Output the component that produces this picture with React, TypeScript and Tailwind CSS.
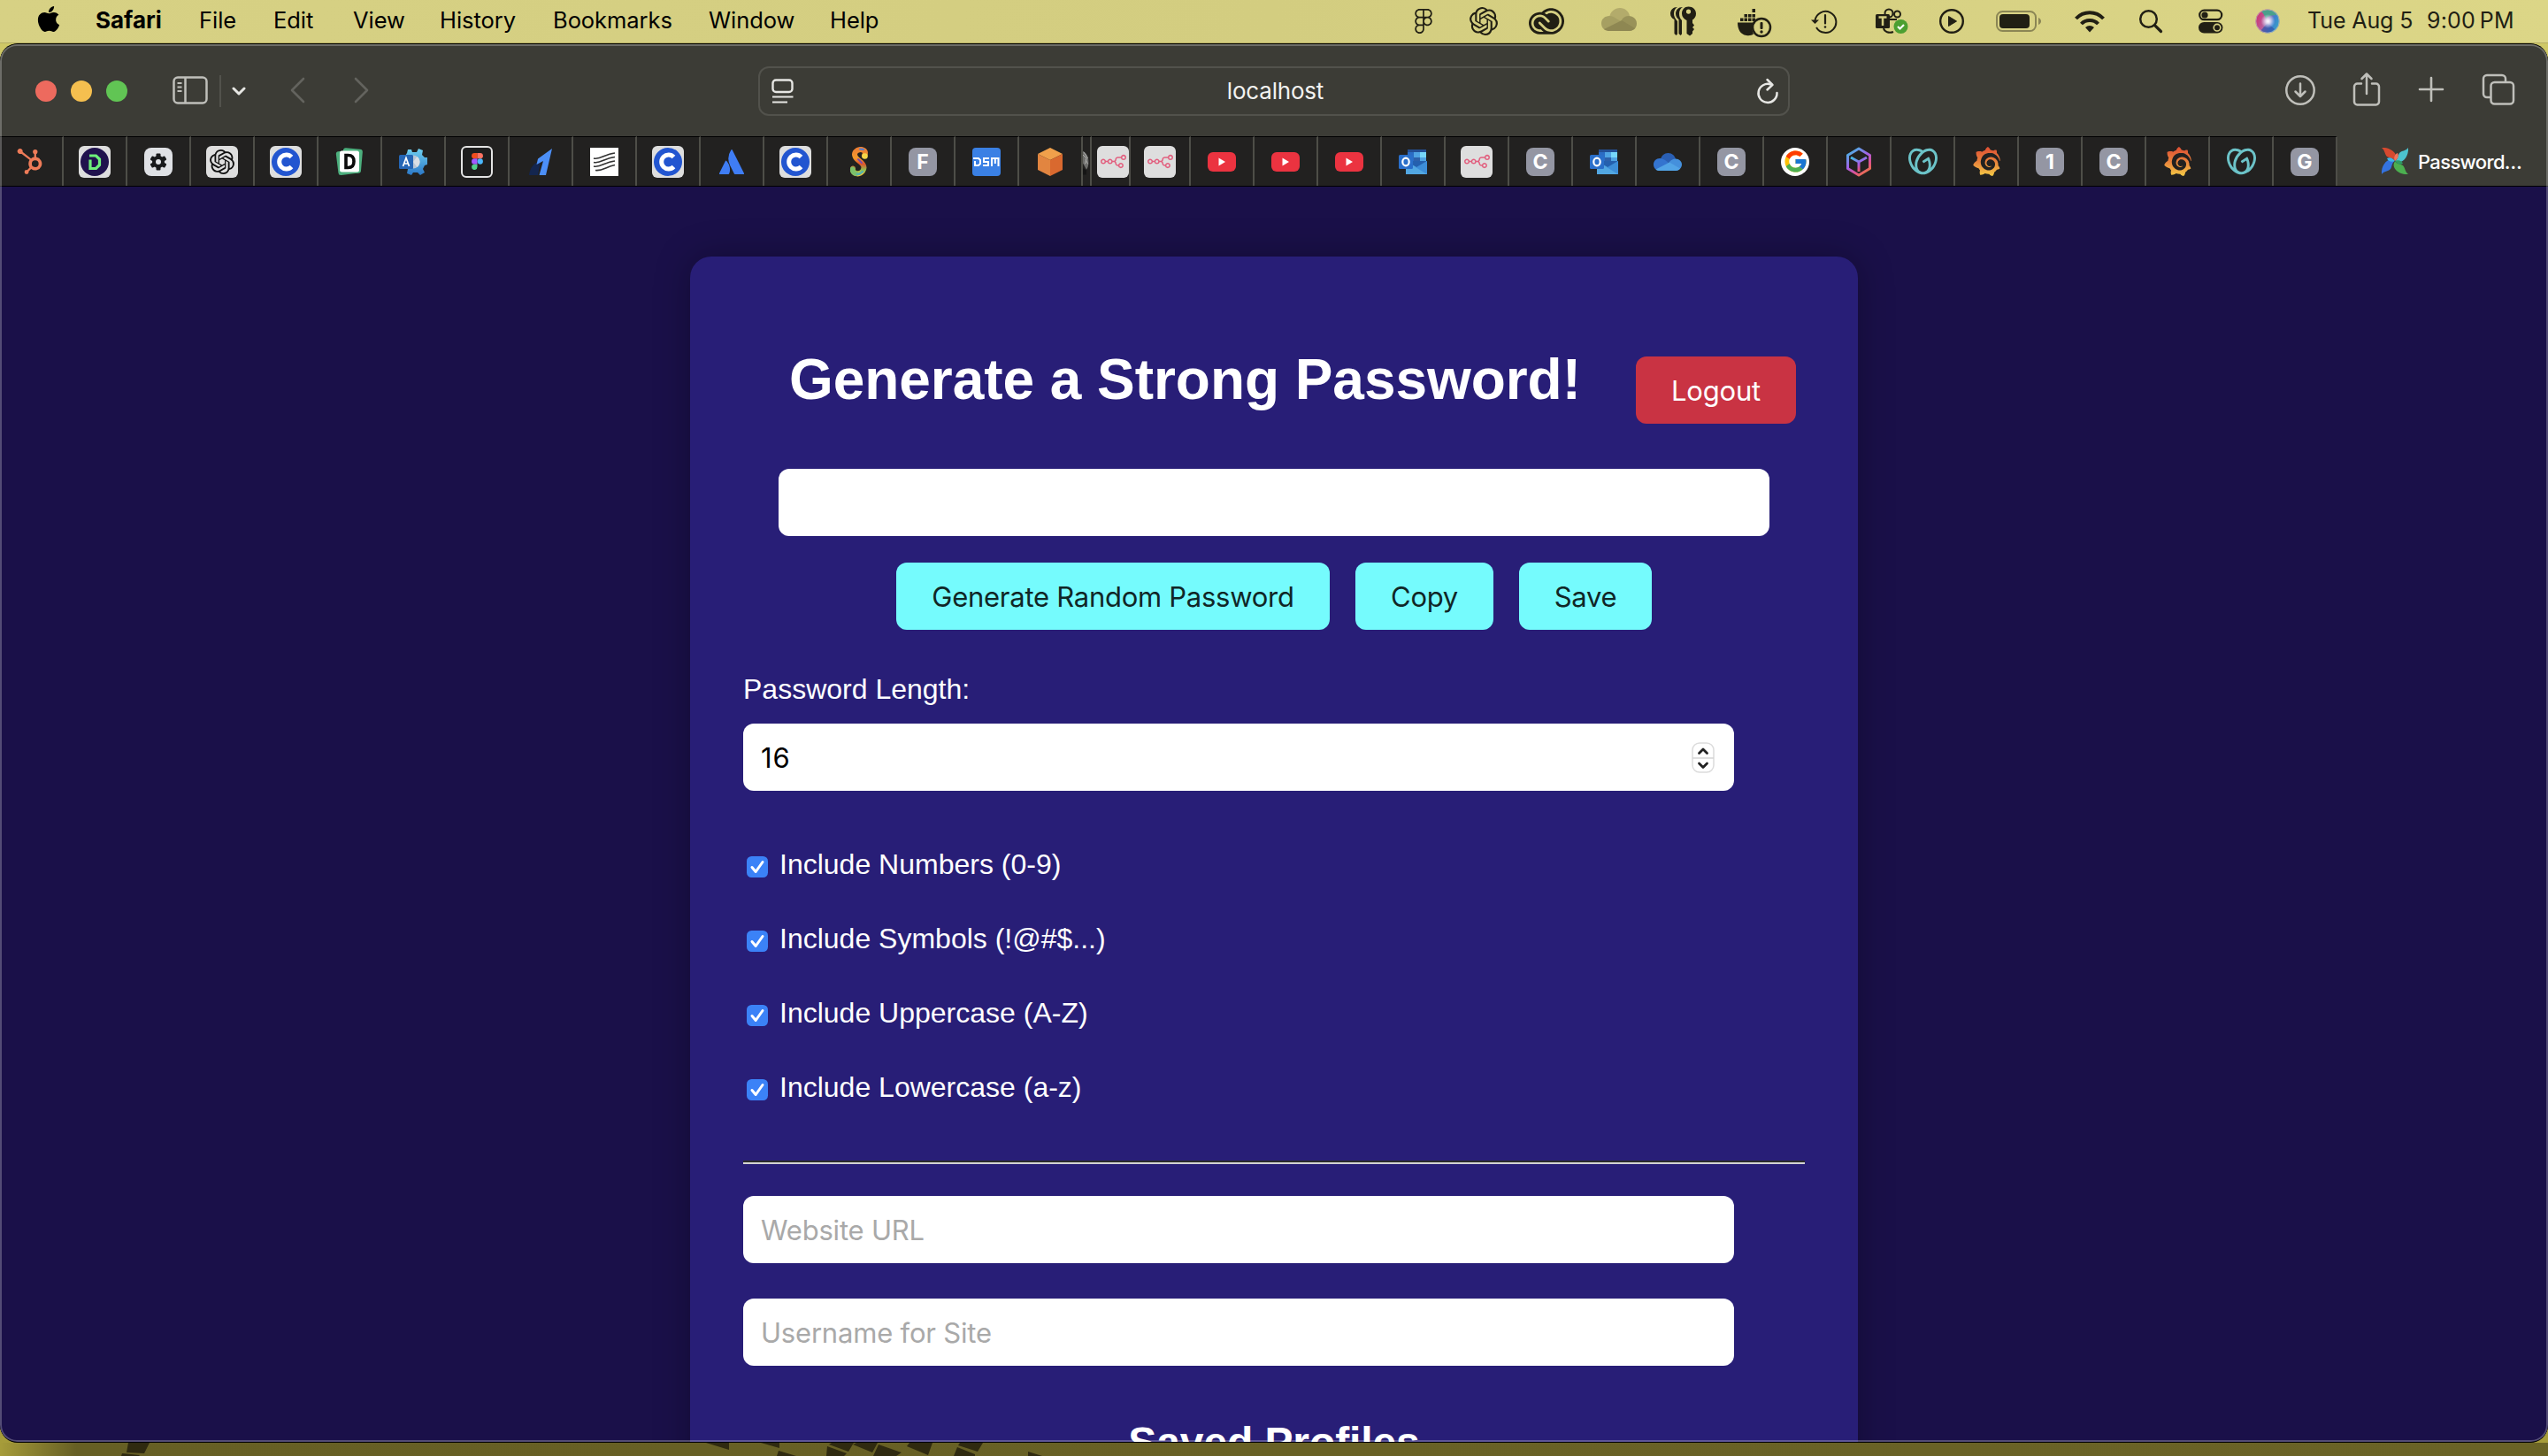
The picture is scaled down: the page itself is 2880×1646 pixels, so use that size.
import type { ReactNode } from "react";
import { SiHubspot, SiOpenai, SiAtlassian, SiGrafana, SiGodaddy, SiAdobecreativecloud, SiFigma, SiN8N } from "react-icons/si";
import { FaApple } from "react-icons/fa";
import { FcGoogle } from "react-icons/fc";

/* ---------- menu bar ---------- */

const MENUS: [string, string][] = [
  ["File", "w-[84px]"],
  ["Edit", "w-[90px]"],
  ["View", "w-[98px]"],
  ["History", "w-[128px]"],
  ["Bookmarks", "w-[176px]"],
  ["Window", "w-[137px]"],
  ["Help", "w-[70px]"],
];

const CloudGray = () => (
  <svg width="40" height="28" viewBox="0 0 40 28">
    <path d="M9 12C10 5 15 1 21 1c6 0 10 4 11 9l-10 6z" fill="#b3ab6b" />
    <path d="M9 27c-5 0-9-3.500-9-8.500S4 10 9 10c3 0 5 1 7 2.500L24 17 4 26z" fill="#a69f62" />
    <path d="M24 13c2-2 4-3 7-3 5 0 9 4 9 8.500S37 27 31 27l-10-9z" fill="#999259" />
    <path d="M3 25l20-10 15 9c-2 2-4 3-7 3H9c-2 0-4-.5-6-2z" fill="#8e8752" />
  </svg>
);

const Keys = () => (
  <svg width="30" height="34" viewBox="0 0 30 34" fill="#211f14">
    <path d="M8 1C3 1 0 4.500 0 8.500c0 3 2 5.500 4.500 6.500v16l2 2 1.500-1.500V17C5 14 4 11 4 8.500 4 5 5.500 2.500 8 1z" />
    <path d="M14 1C9 1 6 4.500 6 8.500c0 3 1.500 5 3.500 6.500v16l2 2 1.500-1.500V16c-2-2-3-4.500-3-7.500C10 5 11.500 2.500 14 1z" />
    <path fillRule="evenodd" d="M20.500.5c5 0 8.500 3.500 8.500 8 0 3-1.500 5.500-4 7v3.500l2 2.500-2 2.500 2 2-2 2.500V31l-3 2.500-3.500-2.500V16c-3-1.500-5.500-4-5.500-7.500 0-4.500 3-8 7.500-8zm0 3a2.600 2.600 0 100 5.200 2.600 2.600 0 000-5.200z" />
  </svg>
);

const DockerAlert = () => (
  <svg width="40" height="34" viewBox="0 0 40 34" fill="#211f14">
    <path d="M1 16.500h20c-3 3-4.500 8-2 13-2 1.500-5 2-8 1.500C4 30 1 24 1 16.500z" />
    <path d="M4 11.500h3.500V15H4zM8.500 11.500H12V15H8.500zM13 11.500h3.500V15H13zM17.500 11.500H21V15h-3.500zM8.500 7H12v3.500H8.500zM13 7h3.500v3.500H13zM17.500 7H21v3.500h-3.500zM17.500 1H21v4h-3.500z" />
    <circle cx="28" cy="22" r="10" fill="none" stroke="#211f14" strokeWidth="2.500" />
    <rect x="26.500" y="16" width="3" height="8" rx="1" />
    <circle cx="28" cy="27" r="1.700" />
  </svg>
);

const ClockAlert = () => (
  <svg width="30" height="30" viewBox="0 0 30 30" fill="none" stroke="#211f14" strokeWidth="2">
    <path d="M4.500 14A12 12 0 1 1 6 22" />
    <path d="M0 13.500h9L4.500 18z" fill="#211f14" stroke="none" />
    <path d="M16 8v9.500" strokeWidth="2.200" strokeLinecap="round" />
    <circle cx="16" cy="21.500" r="1.300" fill="#211f14" stroke="none" />
  </svg>
);

const Teams = () => (
  <svg width="38" height="30" viewBox="0 0 38 30">
    <g fill="none" stroke="#211f14" strokeWidth="2">
      <circle cx="16" cy="6" r="4.500" />
      <circle cx="25.500" cy="7" r="3.500" />
      <path d="M17 13h8M10 23c1 4 6 6 11 4" />
    </g>
    <rect x="1" y="7" width="16" height="16" rx="1.500" fill="#211f14" />
    <path d="M4.500 10.500h9M9 10.500V20" stroke="#d4ce81" strokeWidth="2.500" />
    <circle cx="29.500" cy="21" r="8" fill="#4c9f31" />
    <path d="M26 21l2.500 2.500 4.500-4.500" fill="none" stroke="#fff" strokeWidth="2.200" />
  </svg>
);

const Play = () => (
  <svg width="30" height="30" viewBox="0 0 30 30">
    <circle cx="15" cy="15" r="12.800" fill="none" stroke="#211f14" strokeWidth="2.400" />
    <path d="M11.500 9.500v11l9-5.500z" fill="#211f14" stroke="#211f14" strokeWidth="1" strokeLinejoin="round" />
  </svg>
);

const Battery = () => (
  <svg width="52" height="26" viewBox="0 0 52 26">
    <rect x="1" y="2" width="44" height="22" rx="6.500" fill="none" stroke="#8b8655" strokeWidth="2" />
    <rect x="4" y="5" width="34" height="16" rx="4" fill="#211f14" />
    <path d="M48 9c4 1.500 4 6.500 0 8z" fill="#8b8655" />
  </svg>
);

const Wifi = () => (
  <svg width="36" height="28" viewBox="0 0 36 28" fill="none" stroke="#211f14" strokeWidth="4">
    <path d="M2.500 11C11 2 25 2 33.500 11" />
    <path d="M8.500 17c5-5.300 14-5.300 19 0" />
    <path d="M18 26.500l-5-5.500c3-2.800 7-2.800 10 0z" fill="#211f14" stroke="none" />
  </svg>
);

const Search = () => (
  <svg width="28" height="28" viewBox="0 0 28 28" fill="none" stroke="#211f14" strokeLinecap="round">
    <circle cx="11.500" cy="11.500" r="9.300" strokeWidth="2.500" />
    <path d="M18.800 18.800L25.500 25.500" strokeWidth="3.200" />
  </svg>
);

const ControlCenter = () => (
  <svg width="28" height="28" viewBox="0 0 28 28">
    <rect x="1.200" y="1.700" width="25" height="10.500" rx="5.200" fill="none" stroke="#211f14" strokeWidth="2.200" />
    <circle cx="7" cy="7" r="3.600" fill="#211f14" />
    <rect x="0" y="15" width="27.400" height="12.500" rx="6.200" fill="#211f14" />
    <circle cx="21" cy="21.200" r="3.800" fill="none" stroke="#d6d083" strokeWidth="1.600" />
  </svg>
);

const Siri = () => (
  <svg width="28" height="28" viewBox="0 0 28 28">
    <defs>
      <linearGradient id="siri" x1="0" y1="0.300" x2="1" y2="0.700">
        <stop offset="0" stopColor="#d0306f" />
        <stop offset="0.400" stopColor="#b8609c" />
        <stop offset="0.700" stopColor="#3d7fd0" />
        <stop offset="1" stopColor="#3aa7c4" />
      </linearGradient>
      <radialGradient id="siriGlow">
        <stop offset="0" stopColor="#fff" />
        <stop offset="0.300" stopColor="#f4eefc" stopOpacity="0.850" />
        <stop offset="1" stopColor="#dfe8ff" stopOpacity="0" />
      </radialGradient>
    </defs>
    <circle cx="14" cy="14" r="13.500" fill="url(#siri)" />
    <path d="M7 3a13 13 0 0 1 18 4c-6 0-11 1-13 5-1-4-2-6-5-9z" fill="#49a08c" />
    <path d="M6 25a13 13 0 0 0 16-2l-8-7z" fill="#3454a8" opacity="0.700" />
    <circle cx="14.500" cy="14" r="8" fill="url(#siriGlow)" />
    <circle cx="14" cy="14" r="13.200" fill="none" stroke="#b9b3b6" strokeWidth="0.800" />
  </svg>
);

function MenuBar() {
  return (
    <header className="flex h-12 items-center bg-linear-to-r from-[#d7d184] via-[#d3cd80] to-[#dcd687] pb-px pl-[40px] font-[Inter,sans-serif] text-[26px] leading-[46px] text-black">
      <FaApple className="mb-1 h-[33px] w-[30px]" />
      <span className="mb-0.5 ml-[38px] w-[117px] font-bold">Safari</span>
      {MENUS.map(([label, w]) => (
        <span key={label} className={`${w} mb-0.5 text-[25.500px] tracking-[-0.050px] whitespace-nowrap`}>{label}</span>
      ))}
      <div className="ml-auto flex items-center pr-[35px] text-[#211f14]">
        <SiFigma size={28} />
        <SiOpenai size={32} className="ml-[38px]" />
        <SiAdobecreativecloud size={40} className="ml-[35px]" />
        <span className="ml-[42px] pb-1"><CloudGray /></span>
        <span className="ml-[38px]"><Keys /></span>
        <span className="ml-[45px] pt-1"><DockerAlert /></span>
        <span className="ml-[44px]"><ClockAlert /></span>
        <span className="ml-[42px]"><Teams /></span>
        <span className="ml-[34px]"><Play /></span>
        <span className="ml-[35px]"><Battery /></span>
        <span className="ml-[36px]"><Wifi /></span>
        <span className="ml-[37px]"><Search /></span>
        <span className="ml-[40px]"><ControlCenter /></span>
        <span className="ml-[36px]"><Siri /></span>
        <span className="mb-0.5 ml-[31px] w-[135px] text-[25px] tracking-[-0.100px] whitespace-nowrap">Tue Aug 5</span>
        <span className="mb-0.5 w-[102px] text-[25px] tracking-[0.150px] whitespace-nowrap">9:00<span className="ml-[5px]">PM</span></span>
      </div>
    </header>
  );
}

/* ---------- browser toolbar ---------- */

function Toolbar() {
  return (
    <div className="flex h-[104px] shrink-0 items-center bg-[#3c3c36] pt-px pl-10 font-[Inter,sans-serif]">
      <div className="flex gap-4">
        <span className="size-6 rounded-full bg-[#ed6a5e]" />
        <span className="size-6 rounded-full bg-[#f5bf4f]" />
        <span className="size-6 rounded-full bg-[#61c554]" />
      </div>
      <svg className="mb-0.5 ml-[51px]" width="40" height="32" viewBox="0 0 40 32" fill="none" stroke="#bfbfba" strokeWidth="2.500">
        <rect x="1.500" y="1.500" width="37" height="29" rx="4.500" />
        <path d="M14.500 1.500v29" />
        <path d="M5.500 8h5M5.500 12.500h5M5.500 17h5" strokeWidth="1.800" />
      </svg>
      <span className="ml-[13px] h-9 w-0.5 bg-[#52524c]" />
      <svg className="ml-[12px]" width="16" height="12" viewBox="0 0 16 12" fill="none" stroke="#e6e6e3" strokeWidth="3" strokeLinecap="round" strokeLinejoin="round">
        <path d="M2 3l6 6 6-6" />
      </svg>
      <svg className="mb-0.5 ml-[48px]" width="20" height="30" viewBox="0 0 20 30" fill="none" stroke="#63635e" strokeWidth="2.600" strokeLinecap="round" strokeLinejoin="round">
        <path d="M17 2L4 15l13 13" />
      </svg>
      <svg className="mb-0.5 ml-[53px]" width="20" height="30" viewBox="0 0 20 30" fill="none" stroke="#63635e" strokeWidth="2.600" strokeLinecap="round" strokeLinejoin="round">
        <path d="M3 2l13 13L3 28" />
      </svg>
      <div className="ml-[438px] flex h-14 w-[1166px] items-center justify-between rounded-xl border-2 border-[#52524c] pr-2.5 pl-[13px]">
        <svg width="26" height="28" viewBox="0 0 26 28" fill="none" stroke="#e6e6e3" strokeWidth="2.400">
          <rect x="1.500" y="1.500" width="22" height="13.500" rx="3.500" />
          <path d="M1 20.500h23.500M1 26.500h17" strokeWidth="2" />
        </svg>
        <span className="text-[26px] tracking-[-0.200px] text-[#f2f2f0]">localhost</span>
        <svg width="26" height="30" viewBox="0 0 26 30" fill="none" stroke="#e6e6e3" strokeWidth="2.500" strokeLinecap="round" strokeLinejoin="round">
          <path d="M16.500 7.500A10.500 10.500 0 1 0 23.500 17" />
          <path d="M12.500 2l6 5.800-6 5.700" />
        </svg>
      </div>
      <svg className="mb-0.5 ml-auto" width="36" height="36" viewBox="0 0 36 36" fill="none" stroke="#bfbfba" strokeWidth="2.500" strokeLinecap="round" strokeLinejoin="round">
        <circle cx="18" cy="18" r="15.700" />
        <path d="M18 10.500v14M12.500 19.500l5.500 5.500 5.500-5.500" />
      </svg>
      <svg className="mb-[3px] ml-[41px]" width="32" height="40" viewBox="0 0 32 40" fill="none" stroke="#bfbfba" strokeWidth="2.500" strokeLinecap="round" strokeLinejoin="round">
        <path d="M10 13.500H5.500a3.500 3.500 0 0 0-3.500 3.500v17a3.500 3.500 0 0 0 3.500 3.500h21a3.500 3.500 0 0 0 3.500-3.500V17a3.500 3.500 0 0 0-3.500-3.500H22" />
        <path d="M16 25V3M10.500 8L16 2.500 21.500 8" />
      </svg>
      <svg className="mb-1 ml-[42px]" width="30" height="30" viewBox="0 0 30 30" fill="none" stroke="#bfbfba" strokeWidth="2.600" strokeLinecap="round">
        <path d="M15 2v26M2 15h26" />
      </svg>
      <svg className="mr-[37px] mb-[3px] ml-[42px]" width="38" height="36" viewBox="0 0 38 36" fill="none" stroke="#bfbfba" strokeWidth="2.500">
        <path d="M10 27H6a4 4 0 0 1-4-4V6a4 4 0 0 1 4-4h17a4 4 0 0 1 4 4v4" />
        <rect x="10.500" y="10" width="25.500" height="24.500" rx="4" />
      </svg>
    </div>
  );
}

/* ---------- tab icons ---------- */

const Letter = ({ c }: { c: string }) => (
  <span className="flex size-8 items-center justify-center rounded-lg bg-[#9496a3] pt-0.5 text-[23px] leading-none font-bold text-white">{c}</span>
);

const Tile = ({ children }: { children: ReactNode }) => (
  <span className="flex size-9 items-center justify-center overflow-hidden rounded-md bg-[#dedede]">{children}</span>
);

const CoinC = () => (
  <Tile>
    <svg width="34" height="34" viewBox="0 0 34 34">
      <circle cx="17" cy="17" r="16" fill="#2255d0" />
      <path d="M23.500 11.500A8 8 0 1 0 23.500 22.500" fill="none" stroke="#fff" strokeWidth="5" />
    </svg>
  </Tile>
);

const N8n = () => <Tile><SiN8N size={29} color="#e2607f" /></Tile>;

const DBadge = () => (
  <Tile>
    <svg width="34" height="34" viewBox="0 0 34 34">
      <circle cx="17" cy="17" r="16" fill="#20124d" />
      <path d="M11 10h7.500l4 4v6.500l-4 4H12V14.500" fill="none" stroke="#6df07a" strokeWidth="3.200" />
    </svg>
  </Tile>
);

const Gear = () => (
  <span className="flex size-8 items-center justify-center rounded-lg bg-[#dfe1e5]">
    <svg width="20" height="20" viewBox="0 0 20 20">
      <g fill="#18191b">
        <rect x="7.500" y="0.500" width="5" height="19" rx="1" />
        <rect x="7.500" y="0.500" width="5" height="19" rx="1" transform="rotate(60 10 10)" />
        <rect x="7.500" y="0.500" width="5" height="19" rx="1" transform="rotate(120 10 10)" />
        <circle cx="10" cy="10" r="7" />
      </g>
      <circle cx="10" cy="10" r="3" fill="#dfe1e5" />
    </svg>
  </span>
);

const GreenD = () => (
  <svg width="32" height="32" viewBox="0 0 32 32">
    <rect x="2" y="3" width="24" height="27" rx="3" fill="#4caf7d" transform="rotate(-7 14 16)" />
    <rect x="8" y="1" width="22" height="27" rx="3" fill="#4caf7d" transform="rotate(5 19 14)" />
    <rect x="5" y="3.500" width="22" height="24" rx="2.500" fill="#fff" />
    <path d="M12 8.500v14h2.500c4.500 0 6.500-2.700 6.500-7s-2-7-6.500-7z" fill="none" stroke="#0a0a0a" strokeWidth="3.600" />
  </svg>
);

const AzureGear = () => (
  <svg width="32" height="32" viewBox="0 0 32 32">
    <defs>
      <linearGradient id="azgear" x1="0" y1="0" x2="0" y2="1">
        <stop offset="0" stopColor="#6fd0f0" />
        <stop offset="1" stopColor="#2b78c8" />
      </linearGradient>
    </defs>
    <path d="M10 2h4l1 3h5l2-4 5 2-1 5 3 3h3v8l-3 1-2 4 2 4-5 3-3-3h-5l-2 3-5-2 1-5-3-4V9l2-3z" fill="url(#azgear)" />
    <path d="M16 8.500a7.500 7.500 0 0 1 0 15z" fill="#b9c6d4" />
    <path d="M16 16l4.500-6a7.500 7.500 0 0 1 0 12z" fill="#d9dfe5" />
    <rect x="0" y="8" width="16" height="16" rx="1.500" fill="#2566b5" />
    <path d="M4.500 21L8 11.500 11.500 21M5.700 18h4.600" fill="none" stroke="#fff" strokeWidth="1.700" />
  </svg>
);

const FigmaTile = () => (
  <span className="flex size-9 items-center justify-center rounded-md border-2 border-[#e4e4e4] bg-[#1e1e1e]">
    <svg width="13" height="19" viewBox="0 0 26 38">
      <path d="M6.500 0H13v12.600H6.500a6.300 6.300 0 0 1 0-12.600z" fill="#f24e1e" />
      <path d="M13 0h6.500a6.300 6.300 0 0 1 0 12.600H13z" fill="#ff7262" />
      <path d="M6.500 12.600H13v12.700H6.500a6.300 6.300 0 0 1 0-12.700z" fill="#a259ff" />
      <circle cx="19.500" cy="19" r="6.300" fill="#4ab8ff" />
      <path d="M6.500 25.300H13v6.400a6.400 6.400 0 1 1-6.500-6.400z" fill="#51d08a" />
    </svg>
  </span>
);

const BlueOne = () => (
  <svg width="32" height="32" viewBox="0 0 32 32">
    <path d="M3 31c1-8 5-14 13-16l-3 16z" fill="#14264f" />
    <path d="M29 1L13 12.500l-1.500 6.500 7.500-4-4.500 16H22z" fill="#4c8ff7" />
  </svg>
);

const WaveDoc = () => (
  <span className="flex size-8 items-center justify-center bg-white">
    <svg width="26" height="22" viewBox="0 0 26 22" fill="none" stroke="#333" strokeWidth="1.700">
      <path d="M1 7c8 2 12-5 24-6M1 11.500c8 2 12-5 24-6M1 16c8 2 12-5 24-6M3 20.500c8 1 12-4 22-6" />
    </svg>
  </span>
);

const RainbowS = () => (
  <svg width="32" height="34" viewBox="0 0 32 34" fill="none" strokeLinecap="round">
    <defs>
      <linearGradient id="rainbowS" x1="0" y1="0" x2="0" y2="1">
        <stop offset="0" stopColor="#ee8033" />
        <stop offset="0.350" stopColor="#f39a2c" />
        <stop offset="0.600" stopColor="#e0532c" />
        <stop offset="0.850" stopColor="#8cc152" />
        <stop offset="1" stopColor="#e8c23a" />
      </linearGradient>
    </defs>
    <path d="M22 10C25 4 19 1.500 14 4c-5 3-3 8 1 11s9 7 5 12.500c-4 5-12 3-11-3" stroke="url(#rainbowS)" strokeWidth="6" />
    <circle cx="22.500" cy="10.500" r="3.300" fill="#f6d648" />
    <path d="M15 14l4 4" stroke="#7a4bb0" strokeWidth="1.800" />
    <path d="M8.500 25c-.5 3 1.500 5 4 5.500" stroke="#7bbf6a" strokeWidth="5" />
    <path d="M20 28c-2 2-4 3-6 3" stroke="#58b4a8" strokeWidth="2.500" />
    <path d="M17 2.500l4 .5" stroke="#4f7fd6" strokeWidth="2" />
  </svg>
);

const Dsm = () => (
  <span className="flex size-8 items-center justify-center rounded bg-[#3a80e4]">
    <svg width="30" height="12" viewBox="0 0 30 12" fill="none" stroke="#fff" strokeWidth="2">
      <path d="M0 2h6l2 2v4l-2 2H2V5M18 2h-6v4h5v4h-6M21 11V2h7.500v9M24.800 2v6" />
    </svg>
  </span>
);

const Cube = () => (
  <svg width="32" height="34" viewBox="0 0 32 34">
    <path d="M16 1l14 7-14 7L2 8z" fill="#f0a04b" />
    <path d="M2 8l14 7v18L2 26z" fill="#e28540" />
    <path d="M30 8l-14 7v18l14-7z" fill="#d9692f" />
  </svg>
);

const YouTube = () => (
  <span className="flex h-[22px] w-8 items-center justify-center rounded-md bg-[#eb3340]">
    <svg width="10" height="10" viewBox="0 0 10 10"><path d="M1.500.5v9L9 5z" fill="#fff" /></svg>
  </span>
);

const Outlook = () => (
  <svg width="32" height="30" viewBox="0 0 32 30">
    <rect x="10" y="1" width="21" height="16" fill="#2b6cc4" />
    <rect x="10" y="1" width="21" height="3" fill="#234f96" />
    <rect x="17" y="4" width="7" height="6" fill="#4fa3e3" />
    <rect x="24" y="4" width="7" height="6" fill="#76d6fa" />
    <rect x="17" y="10" width="7" height="6" fill="#2d61ab" />
    <rect x="24" y="10" width="7" height="6" fill="#4fa3e3" />
    <path d="M8 14l24 0v15H8z" fill="#52a7e2" />
    <path d="M32 14v15L19 21z" fill="#3d8ed8" />
    <path d="M8 14h24L20 21z" fill="#2460ae" />
    <rect x="0" y="7" width="16" height="16" rx="1.500" fill="#2a6fca" />
    <ellipse cx="8" cy="15" rx="3.700" ry="4.300" fill="none" stroke="#fff" strokeWidth="2.200" />
  </svg>
);

const OneDrive = () => (
  <svg width="32" height="22" viewBox="0 0 32 22">
    <path d="M8 8c1-4 4-7 8.500-7S24 4 25 8l-7 4z" fill="#2a5fb4" />
    <path d="M7 21c-4 0-7-3-7-7s3-7 7-7c3 0 4 1 6 2l6 4L4 20z" fill="#3474cf" />
    <path d="M18 11c2-2 4-3.500 7-3.500 4 0 7 3 7 6.500s-3 7-7 7l-9-8z" fill="#4590dc" />
    <path d="M2.500 19.500L18 11.500l12 7c-1 1.500-3 2.500-5 2.500H7c-2 0-3.500-.5-4.500-1.500z" fill="#52a4e6" />
  </svg>
);

const Google = () => (
  <span className="flex size-8 items-center justify-center rounded-full bg-white"><FcGoogle size={29} /></span>
);

const WireCube = () => (
  <svg width="30" height="34" viewBox="0 0 30 34" fill="none" stroke="url(#wire)" strokeWidth="3" strokeLinejoin="round">
    <defs>
      <linearGradient id="wire" x1="0.200" y1="0" x2="0.800" y2="1">
        <stop offset="0" stopColor="#46b6e4" />
        <stop offset="0.450" stopColor="#a55fe8" />
        <stop offset="0.750" stopColor="#e0528a" />
        <stop offset="1" stopColor="#ee7b3c" />
      </linearGradient>
    </defs>
    <path d="M15 2l12.500 7.500v15L15 32 2.500 24.500v-15z" />
    <path d="M6 12l9 5 9-5M15 17v11" />
  </svg>
);

const Pinwheel = () => (
  <svg width="32" height="32" viewBox="0 0 32 32">
    <path d="M16 15.500C21 9 12 0 1 1c4 3 3 7 6 10 3 2 6 1 9 4.500z" fill="#d6492f" />
    <path d="M16.500 16C23 21 32 12 31 1c-3 4-7 3-10 6-2 3-1 6-4.500 9z" fill="#4cc3cf" />
    <path d="M16 16.500C11 23 20 32 31 31c-4-3-3-7-6-10-3-2-6-1-9-4.500z" fill="#4caf50" />
    <path d="M15.500 16C9 11 0 20 1 31c3-4 7-3 10-6 2-3 1-6 4.500-9z" fill="#3473e0" />
    <path d="M16 16c-3-4-6-4.500-9-3 1 3 5 5 9 3z" fill="#3fb6e8" />
    <path d="M16 16c4-3 4.500-6 3-9-3 1-5 5-3 9z" fill="#f0765e" />
    <path d="M16 16c3 4 6 4.500 9 3-1-3-5-5-9-3z" fill="#2f9c63" />
  </svg>
);

const Avatar = () => (
  <svg width="10" height="36" viewBox="0 0 10 36">
    <path d="M0 3c5 2 8 8 8 15 0 5-1 8-3 11L0 20z" fill="#6d6d6b" />
    <path d="M0 8l5 5-2 8M1 4l6 9M4 15l3 6" stroke="#b3b3b1" strokeWidth="1.200" fill="none" />
    <path d="M0 27l5 3v6H0z" fill="#151515" />
  </svg>
);

const Grafana = () => <SiGrafana size={33} fill="url(#grafana)" />;
const GoDaddy = () => <SiGodaddy size={33} color="#6cc3c8" />;

const TABS: [ReactNode, string][] = [
  [<SiHubspot size={29} color="#ee7b58" className="mr-1" />, "w-[72px]"],
  [<DBadge />, "w-[72px]"],
  [<Gear />, "w-[72px]"],
  [<Tile><SiOpenai size={28} color="#111" /></Tile>, "w-[72px]"],
  [<CoinC />, "w-[72px]"],
  [<GreenD />, "w-[72px]"],
  [<AzureGear />, "w-[72px]"],
  [<FigmaTile />, "w-[72px]"],
  [<BlueOne />, "w-[72px]"],
  [<WaveDoc />, "w-[72px]"],
  [<CoinC />, "w-[72px]"],
  [<SiAtlassian size={28} color="#3f7df5" />, "w-[72px]"],
  [<CoinC />, "w-[72px]"],
  [<RainbowS />, "w-[72px]"],
  [<Letter c="F" />, "w-[72px]"],
  [<Dsm />, "w-[72px]"],
  [<Cube />, "w-[72px]"],
  [<Avatar />, "w-[10px]"],
  [<N8n />, "w-[44px] pl-[6px]"],
  [<N8n />, "w-[68px]"],
  [<YouTube />, "w-[72px]"],
  [<YouTube />, "w-[72px]"],
  [<YouTube />, "w-[72px]"],
  [<Outlook />, "w-[72px]"],
  [<N8n />, "w-[72px]"],
  [<Letter c="C" />, "w-[72px]"],
  [<Outlook />, "w-[72px]"],
  [<OneDrive />, "w-[72px]"],
  [<Letter c="C" />, "w-[72px]"],
  [<Google />, "w-[72px]"],
  [<WireCube />, "w-[72px]"],
  [<GoDaddy />, "w-[72px]"],
  [<Grafana />, "w-[72px]"],
  [<Letter c="1" />, "w-[72px]"],
  [<Letter c="C" />, "w-[72px]"],
  [<Grafana />, "w-[72px]"],
  [<GoDaddy />, "w-[72px]"],
  [<Letter c="G" />, "w-[72px]"],
];

function TabBar() {
  return (
    <div className="flex h-[57px] shrink-0 border-b border-black bg-[#3c3c36] font-[Inter,sans-serif]">
      <svg width="0" height="0" className="absolute">
        <linearGradient id="grafana" x1="0" y1="0" x2="0" y2="1">
          <stop offset="0" stopColor="#df4f33" />
          <stop offset="0.500" stopColor="#e8813c" />
          <stop offset="1" stopColor="#f4c945" />
        </linearGradient>
      </svg>
      {TABS.map(([icon, w], i) => (
        <div key={i} className={`${w} flex shrink-0 items-center justify-center overflow-hidden border-t border-r-2 border-t-black border-r-[#4e4e48] bg-[#222120]`}>
          {icon}
        </div>
      ))}
      <div className="flex grow items-center gap-[10px] pl-[49px]">
        <Pinwheel />
        <span className="pt-0.5 text-[22px] font-medium tracking-[-0.650px] whitespace-nowrap text-white">Password…</span>
      </div>
    </div>
  );
}

/* ---------- page ---------- */

const OPTIONS = ["Include Numbers (0-9)", "Include Symbols (!@#$...)", "Include Uppercase (A-Z)", "Include Lowercase (a-z)"];

const FIELD = "block h-[76px] w-[1120px] rounded-xl bg-white px-5 pt-px font-[Inter,sans-serif] text-[31px] tracking-[-0.200px] text-black placeholder:text-[#a9a9a9]";
const BUTTON = "h-[76px] rounded-xl bg-[#75fbfd] pt-px font-[Inter,sans-serif] text-[31px] tracking-[-0.270px] text-[#102626]";

function Checkbox() {
  return (
    <svg className="mt-[7px]" width="24" height="24" viewBox="0 0 24 24">
      <rect width="24" height="24" rx="5.500" fill="#3b82f7" />
      <path d="M6 12.500l4.200 5L18 6.500" fill="none" stroke="#fff" strokeWidth="3" strokeLinecap="round" strokeLinejoin="round" />
    </svg>
  );
}

function Stepper() {
  return (
    <svg className="mr-px" width="28" height="38" viewBox="0 0 28 38">
      <rect x="2" y="2" width="24" height="33" rx="8" fill="#fff" stroke="#dcdcdc" strokeWidth="1.500" />
      <path d="M2 19h24" stroke="#d4d4d4" strokeWidth="1.500" />
      <path d="M9.500 13.500L14 9l4.500 4.500M9.500 25l4.500 4.500 4.500-4.500" fill="none" stroke="#222" strokeWidth="2.800" strokeLinecap="round" strokeLinejoin="round" />
    </svg>
  );
}

function Page() {
  return (
    <main className="flex min-h-0 grow justify-center overflow-hidden bg-[#1a1049] pt-[79px] font-['Liberation_Sans',Arial,sans-serif] text-[32px] leading-9 text-white">
      <section className="h-[1700px] w-[1320px] shrink-0 rounded-t-3xl bg-[#281e77] px-[60px] pt-[102px] shadow-[0_0_40px_rgba(0,0,0,0.300)]">
        <div className="flex h-[138px] items-start justify-between pr-2.5 pl-[52px]">
          <h1 className="pt-px text-[64px] leading-[73px] font-bold tracking-[-0.050px] whitespace-nowrap">Generate a Strong Password!</h1>
          <button className="mt-[11px] h-[76px] w-[181px] rounded-xl bg-[#c93343] pt-px font-[Inter,sans-serif] text-[31px] tracking-[-0.200px]">Logout</button>
        </div>
        <input readOnly className={`${FIELD} mx-auto`} />
        <div className="mt-[30px] flex justify-center gap-[29px]">
          <button className={`${BUTTON} w-[490px]`}>Generate Random Password</button>
          <button className={`${BUTTON} w-[156px]`}>Copy</button>
          <button className={`${BUTTON} w-[150px]`}>Save</button>
        </div>
        <label className="mt-[49px] block">Password Length:</label>
        <div className={`${FIELD} mt-[21px] flex items-center justify-between`}>
          <span className="tracking-[0.800px]">16</span>
          <Stepper />
        </div>
        <div className="mt-16 flex flex-col gap-12">
          {OPTIONS.map((o) => (
            <label key={o} className="flex h-9 items-center gap-[13px] pl-1">
              <Checkbox />
              <span className="pt-px">{o}</span>
            </label>
          ))}
        </div>
        <div className="mt-[66px] h-1 border-t-2 border-b-2 border-t-[#2c2c2c] border-b-[#d4d4d4]" />
        <input readOnly placeholder="Website URL" className={`${FIELD} mt-9`} />
        <input readOnly placeholder="Username for Site" className={`${FIELD} mt-10`} />
        <h2 className="mt-[59px] text-center text-[48px] leading-[56px] font-bold tracking-[-0.100px]">Saved Profiles</h2>
      </section>
    </main>
  );
}

/* Strip of wallpaper that shows below the browser window. */
function Wallpaper() {
  return (
    <svg className="block" width="2880" height="15" viewBox="0 0 2880 15" fill="#2f2a10">
      <path d="M145 0h24l-6 12-20-1zM138 12l20 2-1 1h-20zM798 0h26v8zM860 0h21v6zM880 9l20 6h-22zM940 0h25l-6 10-22-8zM935 4l22 8-3 3h-20zM968 0h24l-6 11-22-9zM993 2l26 9-6 4h-26zM1028 0h26l-5 14-24-10zM1085 0h26l-6 10-22-7zM1082 5l20 8v2h-24zM1162 10l16 5h-16z" />
    </svg>
  );
}

export default function App() {
  return (
    <div className="h-[1646px] w-[2880px] overflow-hidden bg-linear-to-r from-[#a69c3a] via-[#665f24] via-3% to-[#6a6326]">
      <div className="h-[1631px] bg-[linear-gradient(#cfc866_60%,#a69c3a_98%)]">
        <MenuBar />
        <div className="h-px bg-[#b5ae62]" />
        <div className="relative flex h-[1582px] flex-col overflow-hidden rounded-[20px] border-y border-black bg-black">
          <Toolbar />
          <TabBar />
          <Page />
          <div className="pointer-events-none absolute inset-0 rounded-[19px] border-2 border-white/25" />
        </div>
      </div>
      <Wallpaper />
    </div>
  );
}
